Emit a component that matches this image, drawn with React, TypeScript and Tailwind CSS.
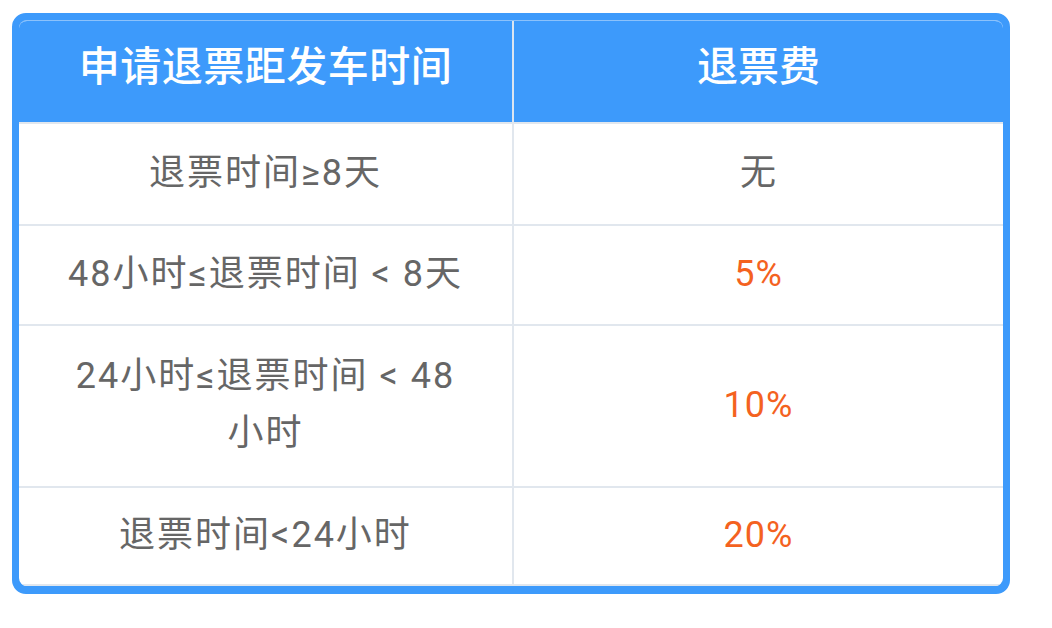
const rows: { range: React.ReactNode; fee: string; highlight: boolean; h: string }[] = [
  { range: "退票时间≥8天", fee: "无", highlight: false, h: "h-[102px]" },
  { range: "48小时≤退票时间 < 8天", fee: "5%", highlight: true, h: "h-[100px]" },
  {
    range: (
      <>
        24小时≤退票时间 &lt; 48
        <br />
        小时
      </>
    ),
    fee: "10%",
    highlight: true,
    h: "h-[162px]",
  },
  { range: "退票时间<24小时", fee: "20%", highlight: true, h: "h-[98px]" },
];

export default function App() {
  return (
    <div
      className="min-h-screen bg-white pl-[12px] pt-[13px]"
      style={{ fontFamily: 'Roboto, "Noto Sans CJK SC", sans-serif' }}
    >
      <div className="w-[998px] rounded-[14px] border-[7px] border-b-[8px] border-[#3d9afb] bg-[#3d9afb]">
        <div className="overflow-hidden rounded-[8px] border-t border-[#8cc2fb] bg-white">
          {/* header */}
          <div className="flex h-[103px] border-b-2 border-[#e1e7ee] bg-[#3d9afb] text-white">
            <div className="flex w-[495px] items-center justify-center border-r-2 border-[#dbe5f0] pb-[8px] text-[41px] font-medium tracking-[0.5px]">
              申请退票距发车时间
            </div>
            <div className="flex flex-1 items-center justify-center pb-[8px] text-[41px] font-medium">
              退票费
            </div>
          </div>

          {rows.map((row, i) => (
            <div key={i} className={`flex ${row.h} border-b-2 border-[#e1e7ee]`}>
              <div className="flex w-[495px] items-center justify-center border-r-2 border-[#e1e7ee] pb-[2px] text-center text-[36px] leading-[57px] tracking-[2px] text-[#666666]">
                <div>{row.range}</div>
              </div>
              <div
                className={`flex flex-1 items-center justify-center pb-[2px] text-[36px] tracking-[1px] ${
                  row.highlight ? "text-[#f4621f]" : "text-[#666666]"
                }`}
              >
                {row.fee}
              </div>
            </div>
          ))}
        </div>
      </div>
    </div>
  );
}
